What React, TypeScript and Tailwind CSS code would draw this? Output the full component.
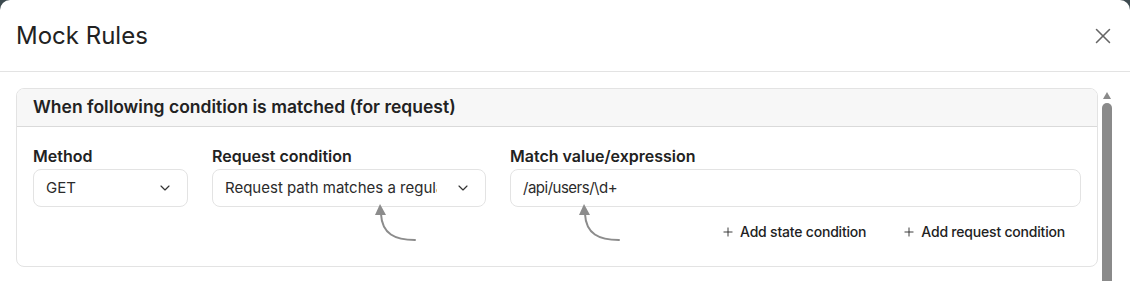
import { ChevronDown, Plus, X } from 'lucide-react';

// 🏹 Curved annotation arrow pointing up at a field
const CurvedArrow = ({ className }: { className: string }) => (
  <svg
    className={className}
    width="44"
    height="42"
    viewBox="0 0 44 42"
    fill="none"
    aria-hidden="true"
  >
    <path d="M40 38 C20 38 7 32 6 12" stroke="#8c8c8c" strokeWidth="2" strokeLinecap="round" />
    <polygon points="5,2 0,13 11,13" fill="#8c8c8c" />
  </svg>
);

const SelectBox = ({ value, className, textWidth }: { value: string; className: string; textWidth?: string }) => (
  <div
    className={`flex h-[38px] items-center justify-between rounded-lg border border-[#e3e3e3] bg-white pl-[12px] pr-[14px] ${className}`}
  >
    <span className={`shrink-0 overflow-hidden whitespace-nowrap text-[15px] text-[#2b2b2b] ${textWidth ?? ''}`}>{value}</span>
    <ChevronDown size={16} strokeWidth={1.75} className="ml-2 shrink-0 text-[#333]" />
  </div>
);

export default function App() {
  return (
    <div className="h-[281px] w-[1130px] overflow-hidden bg-[#3d4a4f] font-['Inter','Liberation_Sans',sans-serif]">
      <div className="flex h-full flex-col rounded-t-[10px] bg-white">
        {/* header */}
        <div className="flex h-[72px] shrink-0 items-center justify-between border-b border-[#e3e3e3] pl-4 pr-[14px]">
          <h1 className="text-[24px] leading-none text-[#222]">Mock Rules</h1>
          <X size={26} strokeWidth={1.4} className="text-[#666]" />
        </div>

        {/* scroll area */}
        <div className="flex flex-1 overflow-hidden">
          <div className="flex-1 pl-4 pr-[3px] pt-4">
            <section className="overflow-hidden rounded-lg border border-[#e3e3e3]">
              <div className="flex h-[38px] items-center border-b border-[#dadada] bg-[#f7f7f7] px-4">
                <h2 className="text-[17.5px] font-semibold text-[#222]">
                  When following condition is matched (for request)
                </h2>
              </div>

              <div className="relative px-4 pb-[24px] pt-[19px]">
                <div className="flex gap-[24px]">
                  <div className="flex flex-col gap-[3px]">
                    <label className="text-[16px] font-semibold leading-[20px] text-[#222]">Method</label>
                    <SelectBox value="GET" className="w-[155px]" />
                  </div>
                  <div className="flex flex-col gap-[3px]">
                    <label className="text-[16px] font-semibold leading-[20px] text-[#222]">Request condition</label>
                    <SelectBox
                      value="Request path matches a regular expression"
                      className="w-[274px]"
                      textWidth="w-[212px]"
                    />
                  </div>
                  <div className="flex flex-1 flex-col gap-[3px]">
                    <label className="text-[16px] font-semibold leading-[20px] text-[#222]">Match value/expression</label>
                    <div className="flex h-[38px] items-center rounded-lg border border-[#e3e3e3] bg-white px-[12px]">
                      <span className="text-[15px] tracking-[-0.5px] text-[#2b2b2b]">/api/users/\d+</span>
                    </div>
                  </div>
                </div>

                <div className="mt-[14px] flex justify-end gap-[36px] pr-[16px]">
                  <button className="flex items-center gap-[5px] text-[14px] font-medium tracking-[-0.2px] text-[#222]">
                    <Plus size={14} strokeWidth={1.5} />
                    Add state condition
                  </button>
                  <button className="flex items-center gap-[5px] text-[14px] font-medium tracking-[-0.2px] text-[#222]">
                    <Plus size={14} strokeWidth={1.5} />
                    Add request condition
                  </button>
                </div>

                <CurvedArrow className="absolute left-[358px] top-[75px]" />
                <CurvedArrow className="absolute left-[562px] top-[75px]" />
              </div>
            </section>
          </div>

          {/* scrollbar */}
          <div className="mr-[18px] flex w-[11px] shrink-0 flex-col items-center pt-[20px]">
            <div className="h-0 w-0 border-x-[4px] border-b-[7px] border-x-transparent border-b-[#8a8a8a]" />
            <div className="mt-[4px] w-[10px] flex-1 rounded-t-full bg-[#8a8a8a]" />
          </div>
        </div>
      </div>
    </div>
  );
}
